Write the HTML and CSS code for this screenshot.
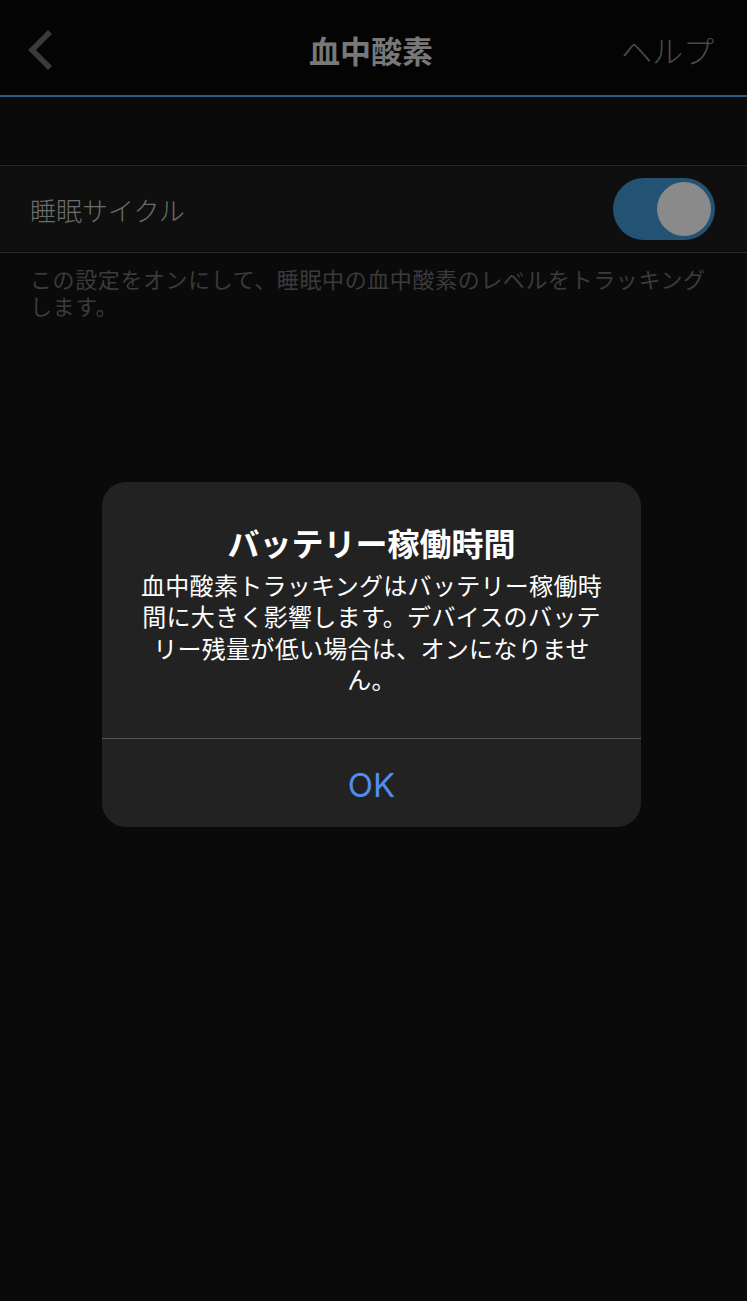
FILE: index.html
```html
<!DOCTYPE html>
<html lang="ja">
<head>
    <meta charset="UTF-8">
    <meta name="viewport" content="width=device-width, initial-scale=1.0">
    <title>血中酸素</title>
    <link rel="stylesheet" href="styles.css">
</head>
<body>
    <div id="header">
        <div class="back">
            <svg width="30" height="44" viewBox="0 0 30 44">
                <path d="M22 3 L4 21 L22 39" fill="none" stroke="#3a3a3a" stroke-width="5.5"/>
            </svg>
        </div>
        <div class="title">血中酸素</div>
        <div class="help">ヘルプ</div>
    </div>

    <div id="content">
        <div class="row">
            <span class="label">睡眠サイクル</span>
            <div class="toggle"><div class="knob"></div></div>
        </div>
        <p class="note">この設定をオンにして、睡眠中の血中酸素のレベルをトラッキングします。</p>
    </div>

    <div id="overlay">
        <div class="dialog">
            <div class="dialog_body">
                <h2>バッテリー稼働時間</h2>
                <p>血中酸素トラッキングはバッテリー稼働時間に大きく影響します。デバイスのバッテリー残量が低い場合は、オンになりません。</p>
            </div>
            <button id="ok">OK</button>
        </div>
    </div>
</body>
</html>
```

FILE: styles.css
```css
*{
    margin: 0;
    padding: 0;
    box-sizing: border-box;
}
body{
    background-color: #0a0a0a;
    height: 100vh;
    font-family: "Noto Sans CJK JP", "Noto Sans", sans-serif;
    position: relative;
    overflow: hidden;
}
#header{
    display: flex;
    align-items: center;
    justify-content: space-between;
    height: 97px;
    padding: 4px 33px 0 28px;
    background-color: #040404;
    border-bottom: 2px solid #2b5a80;
}
.back{
    width: 100px;
    display: flex;
    align-items: center;
    padding-top: 2px;
}
.title{
    color: #787878;
    font-size: 31px;
    font-weight: bold;
}
.help{
    width: 100px;
    text-align: right;
    color: #4a4a4a;
    font-size: 31px;
    font-weight: 300;
    white-space: nowrap;
}
#content{
    padding-top: 68px;
}
.row{
    display: flex;
    align-items: center;
    justify-content: space-between;
    height: 88px;
    padding: 0 32px 0 30px;
    background-color: #0f0f0f;
    border-top: 1px solid #262626;
    border-bottom: 1px solid #2a2a2a;
}
.label{
    color: #6c6c6c;
    font-size: 26px;
    font-weight: 300;
}
.toggle{
    width: 102px;
    height: 62px;
    border-radius: 31px;
    background-color: #245273;
    display: flex;
    align-items: center;
    justify-content: flex-end;
    padding-right: 4px;
}
.knob{
    width: 54px;
    height: 54px;
    border-radius: 50%;
    background-color: #8a8a8a;
}
.note{
    padding: 12px 30px 0 30px;
    color: #3b3b3b;
    font-size: 22px;
    letter-spacing: 0.6px;
    line-height: 27px;
}
#overlay{
    position: absolute;
    top: 0;
    left: 0;
    right: 0;
    bottom: 0;
    display: flex;
    justify-content: center;
    align-items: flex-start;
    padding-top: 482px;
    padding-right: 4px;
}
.dialog{
    width: 539px;
    background-color: #222222;
    border-radius: 24px;
    overflow: hidden;
}
.dialog_body{
    padding: 40px 34px 43px 34px;
    text-align: center;
    color: #ffffff;
    border-bottom: 1px solid #555555;
}
.dialog_body h2{
    font-size: 32px;
    line-height: 40px;
    font-weight: bold;
    margin-bottom: 7px;
}
.dialog_body p{
    font-size: 24px;
    line-height: 31.4px;
    letter-spacing: 0.3px;
}
#ok{
    display: block;
    width: 100%;
    height: 88px;
    padding-top: 4px;
    background: none;
    border: none;
    outline: none;
    color: #4f8ef0;
    font-family: "Inter", "Liberation Sans", sans-serif;
    font-size: 33px;
    cursor: pointer;
}
```
